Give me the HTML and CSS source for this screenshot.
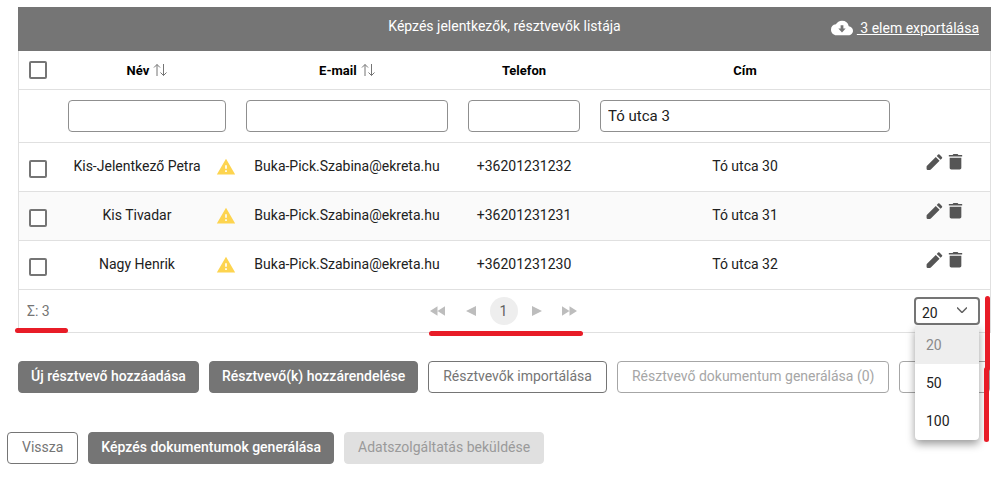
FILE: index.html
```html
<!DOCTYPE html>
<html lang="hu">
<head>
  <meta charset="UTF-8" />
  <meta name="viewport" content="width=device-width, initial-scale=1.0" />
  <title>Képzés jelentkezők, résztvevők listája</title>
  <link rel="stylesheet" href="styles.css">
</head>
<body>

  <!-- Icons -->
  <svg class="icon-defs" aria-hidden="true">
    <symbol id="sort" viewBox="0 0 14 14">
      <path d="M4 13V1.5M1 4.5l3-3 3 3M10.5 1v11.5M7.5 9.5l3 3 3-3" fill="none" stroke="currentColor" />
    </symbol>
    <symbol id="warning" viewBox="0 0 24 24">
      <path d="M1 21h22L12 2 1 21zm12-3h-2v-2h2v2zm0-4h-2v-4h2v4z" fill="currentColor" />
    </symbol>
    <symbol id="pencil" viewBox="0 0 24 24">
      <path d="M2.500 17.500c0-.4.2-.8.5-1.100L13.500 5.900l4.600 4.600L7.600 21c-.3.3-.7.5-1.100.5h-3a1 1 0 0 1-1-1v-3zM20.900 7.700a1.200 1.200 0 0 0 0-1.700L18 3.100a1.200 1.200 0 0 0-1.700 0l-1.600 1.600 4.600 4.600 1.600-1.600z" fill="currentColor" />
    </symbol>
    <symbol id="trash" viewBox="0 0 24 24">
      <path d="M5 19c0 1.1.9 2 2 2h10c1.1 0 2-.9 2-2V7H5v12zM20 3.500h-4.500l-1-1h-5l-1 1H4v2h16v-2z" fill="currentColor" />
    </symbol>
    <symbol id="cloud" viewBox="0 0 24 24">
      <path d="M19.350 10.040A7.490 7.490 0 0 0 12 4C9.110 4 6.600 5.640 5.350 8.040A5.994 5.994 0 0 0 0 14c0 3.310 2.690 6 6 6h13c2.760 0 5-2.240 5-5 0-2.640-2.050-4.780-4.650-4.960zM16 12.500l-4 4.500-4-4.500h2.500V9h3v3.500H16z" fill="currentColor" />
    </symbol>
    <symbol id="prev" viewBox="0 0 10 12">
      <path d="M10 1v10L0 6z" fill="currentColor" />
    </symbol>
    <symbol id="next" viewBox="0 0 10 12">
      <path d="M0 1v10l10-5z" fill="currentColor" />
    </symbol>
    <symbol id="first" viewBox="0 0 16 12">
      <path d="M8 1v10L0 6zM16 1v10L8 6z" fill="currentColor" />
    </symbol>
    <symbol id="last" viewBox="0 0 16 12">
      <path d="M0 1v10l8-5zM8 1v10l8-5z" fill="currentColor" />
    </symbol>
  </svg>

  <!-- Participants list -->
  <div class="panel">
    <div class="panel-header">
      <h2>Képzés jelentkezők, résztvevők listája</h2>
      <a href="#" class="export"><svg class="cloud-icon"><use href="#cloud" /></svg><span>&nbsp;3 elem exportálása</span></a>
    </div>

    <table>
      <colgroup>
        <col class="col-check">
        <col class="col-name">
        <col class="col-warning">
        <col class="col-email">
        <col class="col-phone">
        <col class="col-address">
        <col class="col-actions">
      </colgroup>
      <thead>
        <tr>
          <th class="check"><input type="checkbox" aria-label="Összes kijelölése"></th>
          <th colspan="2">Név <svg class="sort-icon"><use href="#sort" /></svg></th>
          <th>E-mail <svg class="sort-icon"><use href="#sort" /></svg></th>
          <th>Telefon</th>
          <th>Cím</th>
          <th></th>
        </tr>
        <tr class="filters">
          <td></td>
          <td colspan="2"><input type="text" aria-label="Név"></td>
          <td><input type="text" aria-label="E-mail"></td>
          <td><input type="text" aria-label="Telefon"></td>
          <td><input type="text" aria-label="Cím" value="Tó utca 3"></td>
          <td></td>
        </tr>
      </thead>
      <tbody>
        <tr>
          <td class="check"><input type="checkbox" aria-label="Kis-Jelentkező Petra"></td>
          <td>Kis-Jelentkező Petra</td>
          <td class="warning"><svg><use href="#warning" /></svg></td>
          <td>Buka-Pick.Szabina@ekreta.hu</td>
          <td>+36201231232</td>
          <td>Tó utca 30</td>
          <td class="actions">
            <button aria-label="Szerkesztés"><svg><use href="#pencil" /></svg></button><button aria-label="Törlés"><svg><use href="#trash" /></svg></button>
          </td>
        </tr>
        <tr>
          <td class="check"><input type="checkbox" aria-label="Kis Tivadar"></td>
          <td>Kis Tivadar</td>
          <td class="warning"><svg><use href="#warning" /></svg></td>
          <td>Buka-Pick.Szabina@ekreta.hu</td>
          <td>+36201231231</td>
          <td>Tó utca 31</td>
          <td class="actions">
            <button aria-label="Szerkesztés"><svg><use href="#pencil" /></svg></button><button aria-label="Törlés"><svg><use href="#trash" /></svg></button>
          </td>
        </tr>
        <tr>
          <td class="check"><input type="checkbox" aria-label="Nagy Henrik"></td>
          <td>Nagy Henrik</td>
          <td class="warning"><svg><use href="#warning" /></svg></td>
          <td>Buka-Pick.Szabina@ekreta.hu</td>
          <td>+36201231230</td>
          <td>Tó utca 32</td>
          <td class="actions">
            <button aria-label="Szerkesztés"><svg><use href="#pencil" /></svg></button><button aria-label="Törlés"><svg><use href="#trash" /></svg></button>
          </td>
        </tr>
      </tbody>
    </table>

    <!-- Paginator -->
    <div class="paginator">
      <div class="total">Σ: 3<span class="mark mark-total"></span></div>
      <div class="pages">
        <button aria-label="Első oldal"><svg class="double"><use href="#first" /></svg></button>
        <button aria-label="Előző oldal"><svg><use href="#prev" /></svg></button>
        <button class="current">1</button>
        <button aria-label="Következő oldal"><svg><use href="#next" /></svg></button>
        <button aria-label="Utolsó oldal"><svg class="double"><use href="#last" /></svg></button>
        <span class="mark mark-pages"></span>
      </div>
      <div class="page-size">
        <select aria-label="Elemek oldalanként">
          <option selected>20</option>
          <option>50</option>
          <option>100</option>
        </select>
        <svg class="chevron" viewBox="0 0 10 6"><path d="M0 0.5l5 5 5-5" fill="none" stroke="currentColor" stroke-width="1.5" /></svg>
        <ul class="menu" role="listbox" aria-label="Elemek oldalanként">
          <li class="selected" role="option" aria-selected="true">20</li>
          <li role="option" aria-selected="false">50</li>
          <li role="option" aria-selected="false">100</li>
        </ul>
        <span class="mark mark-size-top"></span>
        <span class="mark mark-size-bottom"></span>
      </div>
    </div>
  </div>

  <!-- List buttons -->
  <div class="buttons list-buttons">
    <button class="btn primary">Új résztvevő hozzáadása</button>
    <button class="btn primary">Résztvevő(k) hozzárendelése</button>
    <button class="btn">Résztvevők importálása</button>
    <button class="btn outline-disabled" disabled>Résztvevő dokumentum generálása (0)</button>
    <button class="btn rest outline-disabled" aria-label="További művelet" disabled></button>
  </div>

  <!-- Page buttons -->
  <div class="buttons page-buttons">
    <button class="btn">Vissza</button>
    <button class="btn primary">Képzés dokumentumok generálása</button>
    <button class="btn disabled" disabled>Adatszolgáltatás beküldése</button>
  </div>

</body>
</html>
```
FILE: styles.css
```css
* {
  box-sizing: border-box;
}

body {
  font-family: Roboto, Arial, sans-serif;
  font-size: 14px;
  line-height: 20px;
  color: #212121;
  background: white;
  margin: 0;
  padding: 7px 0 0;
}

button, input, select {
  font: inherit;
  color: inherit;
}

button {
  cursor: pointer;
}

.icon-defs {
  position: absolute;
  width: 0;
  height: 0;
}

.panel {
  margin: 0 17px 0 18px;
}

.panel-header {
  display: grid;
  grid-template-columns: 1fr auto 1fr;
  height: 44px;
  padding: 0 12px;
  background-color: #757575;
  color: white;
}

.panel-header h2 {
  grid-column: 2;
  margin: 0;
  padding-top: 9px;
  font-size: 14px;
  font-weight: 400;
}

.export {
  display: flex;
  justify-content: flex-end;
  align-items: center;
  gap: 4px;
  height: 42px;
  color: white;
  text-decoration: none;
}

.export span {
  text-decoration: underline;
}

.cloud-icon {
  width: 22px;
  height: 22px;
}

/* Table */
table {
  width: 100%;
  table-layout: fixed;
  border-spacing: 0;
  border: 1px solid #e0e0e0;
  border-width: 0 1px;
}

.col-check { width: 39px; }
.col-name { width: 158px; }
.col-warning { width: 20px; }
.col-email { width: 222px; }
.col-phone { width: 132px; }
.col-address { width: auto; }
.col-actions { width: 90px; }

th, td {
  height: 49px;
  padding: 0 0 2px;
  border-bottom: 1px solid #e0e0e0;
  text-align: center;
  white-space: nowrap;
}

th {
  height: 39px;
  padding: 2px 0 0;
  font-size: 13px;
  font-weight: 700;
  color: black;
}

.filters td {
  height: 53px;
  padding: 0 10px;
}

tbody tr:nth-child(even) {
  background-color: #fafafa;
}

input[type="text"] {
  display: block;
  width: 100%;
  height: 32px;
  padding: 0 7px;
  border: 1px solid #8f8f8f;
  border-radius: 4px;
  font-size: 15px;
}

input[type="checkbox"] {
  appearance: none;
  display: block;
  width: 18px;
  height: 18px;
  margin: 0;
  border: 2px solid #757575;
  border-radius: 2px;
  background: white;
}

.check {
  padding: 0 0 0 10px;
}

td.check {
  padding-top: 4px;
}

.sort-icon {
  width: 14px;
  height: 14px;
  margin-left: 1px;
  color: #757575;
  vertical-align: -2px;
}

.warning {
  padding: 0;
}

.warning svg {
  display: block;
  width: 20px;
  height: 20px;
  color: #fdd44f;
}

.actions {
  padding-bottom: 6px;
}

.actions button {
  padding: 0;
  border: none;
  background: none;
  color: #555;
}

.actions svg {
  display: block;
  width: 21px;
  height: 20px;
}

/* Paginator */
.paginator {
  display: grid;
  grid-template-columns: 1fr auto 1fr;
  align-items: center;
  height: 43px;
  padding: 0 10px 0 8px;
  border: 1px solid #e0e0e0;
  border-top: none;
  color: #757575;
}

.total, .pages, .page-size {
  position: relative;
}

.pages {
  display: flex;
  align-items: center;
  gap: 5px;
}

.pages button {
  display: flex;
  align-items: center;
  justify-content: center;
  width: 28px;
  height: 28px;
  padding: 0;
  border: none;
  border-radius: 50%;
  background: none;
  color: #bdbdbd;
}

.pages .current {
  background-color: #eee;
  color: #616161;
}

.pages svg {
  width: 10px;
  height: 12px;
}

.pages .double {
  width: 15px;
}

.page-size {
  justify-self: end;
  width: 66px;
  color: #212121;
}

.page-size select {
  appearance: none;
  display: block;
  width: 100%;
  height: 28px;
  padding: 3px 6px 0;
  border: 2px solid #757575;
  border-radius: 4px;
  background: white;
}

.chevron {
  position: absolute;
  top: 10px;
  right: 13px;
  width: 10px;
  height: 6px;
  color: #616161;
}

.menu {
  position: absolute;
  top: 29px;
  left: 1px;
  right: 1px;
  z-index: 1;
  margin: 0;
  padding: 0;
  list-style: none;
  background: white;
  border-radius: 0 0 4px 4px;
  box-shadow: 0 4px 8px rgba(0, 0, 0, 0.4);
}

.menu li {
  padding: 9px 11px;
}

.menu .selected {
  background-color: #eee;
  color: #8a8a8a;
}

/* Red marker lines */
.mark {
  position: absolute;
  z-index: 2;
  height: 5px;
  border-radius: 3px;
  background-color: #e81c27;
}

.mark-total {
  top: 27px;
  left: -12px;
  width: 53px;
}

.mark-pages {
  top: 34px;
  left: 5px;
  right: 1px;
}

.mark-size-top, .mark-size-bottom {
  top: -1px;
  right: -10px;
  width: 5px;
  height: 75px;
}

.mark-size-bottom {
  top: 70px;
  right: -9px;
}

/* Buttons */
.buttons {
  display: flex;
  gap: 10px;
}

.list-buttons {
  margin: 28px 18px 0;
}

.page-buttons {
  margin: 39px 7px 0;
}

.btn {
  flex: none;
  height: 32px;
  padding: 0 14px 2px;
  border: 1px solid #757575;
  border-radius: 4px;
  background: white;
  color: #757575;
}

.btn.primary {
  padding: 0 12px 2px;
  background-color: #757575;
  color: white;
  font-weight: 500;
}

.btn.rest {
  flex: 1;
}

.btn.outline-disabled {
  border-color: #a6a6a6;
  color: #a6a6a6;
}

.btn.disabled {
  padding: 0 13px 2px;
  border-color: #e0e0e0;
  background-color: #e0e0e0;
  color: #9a9a9a;
}
```
